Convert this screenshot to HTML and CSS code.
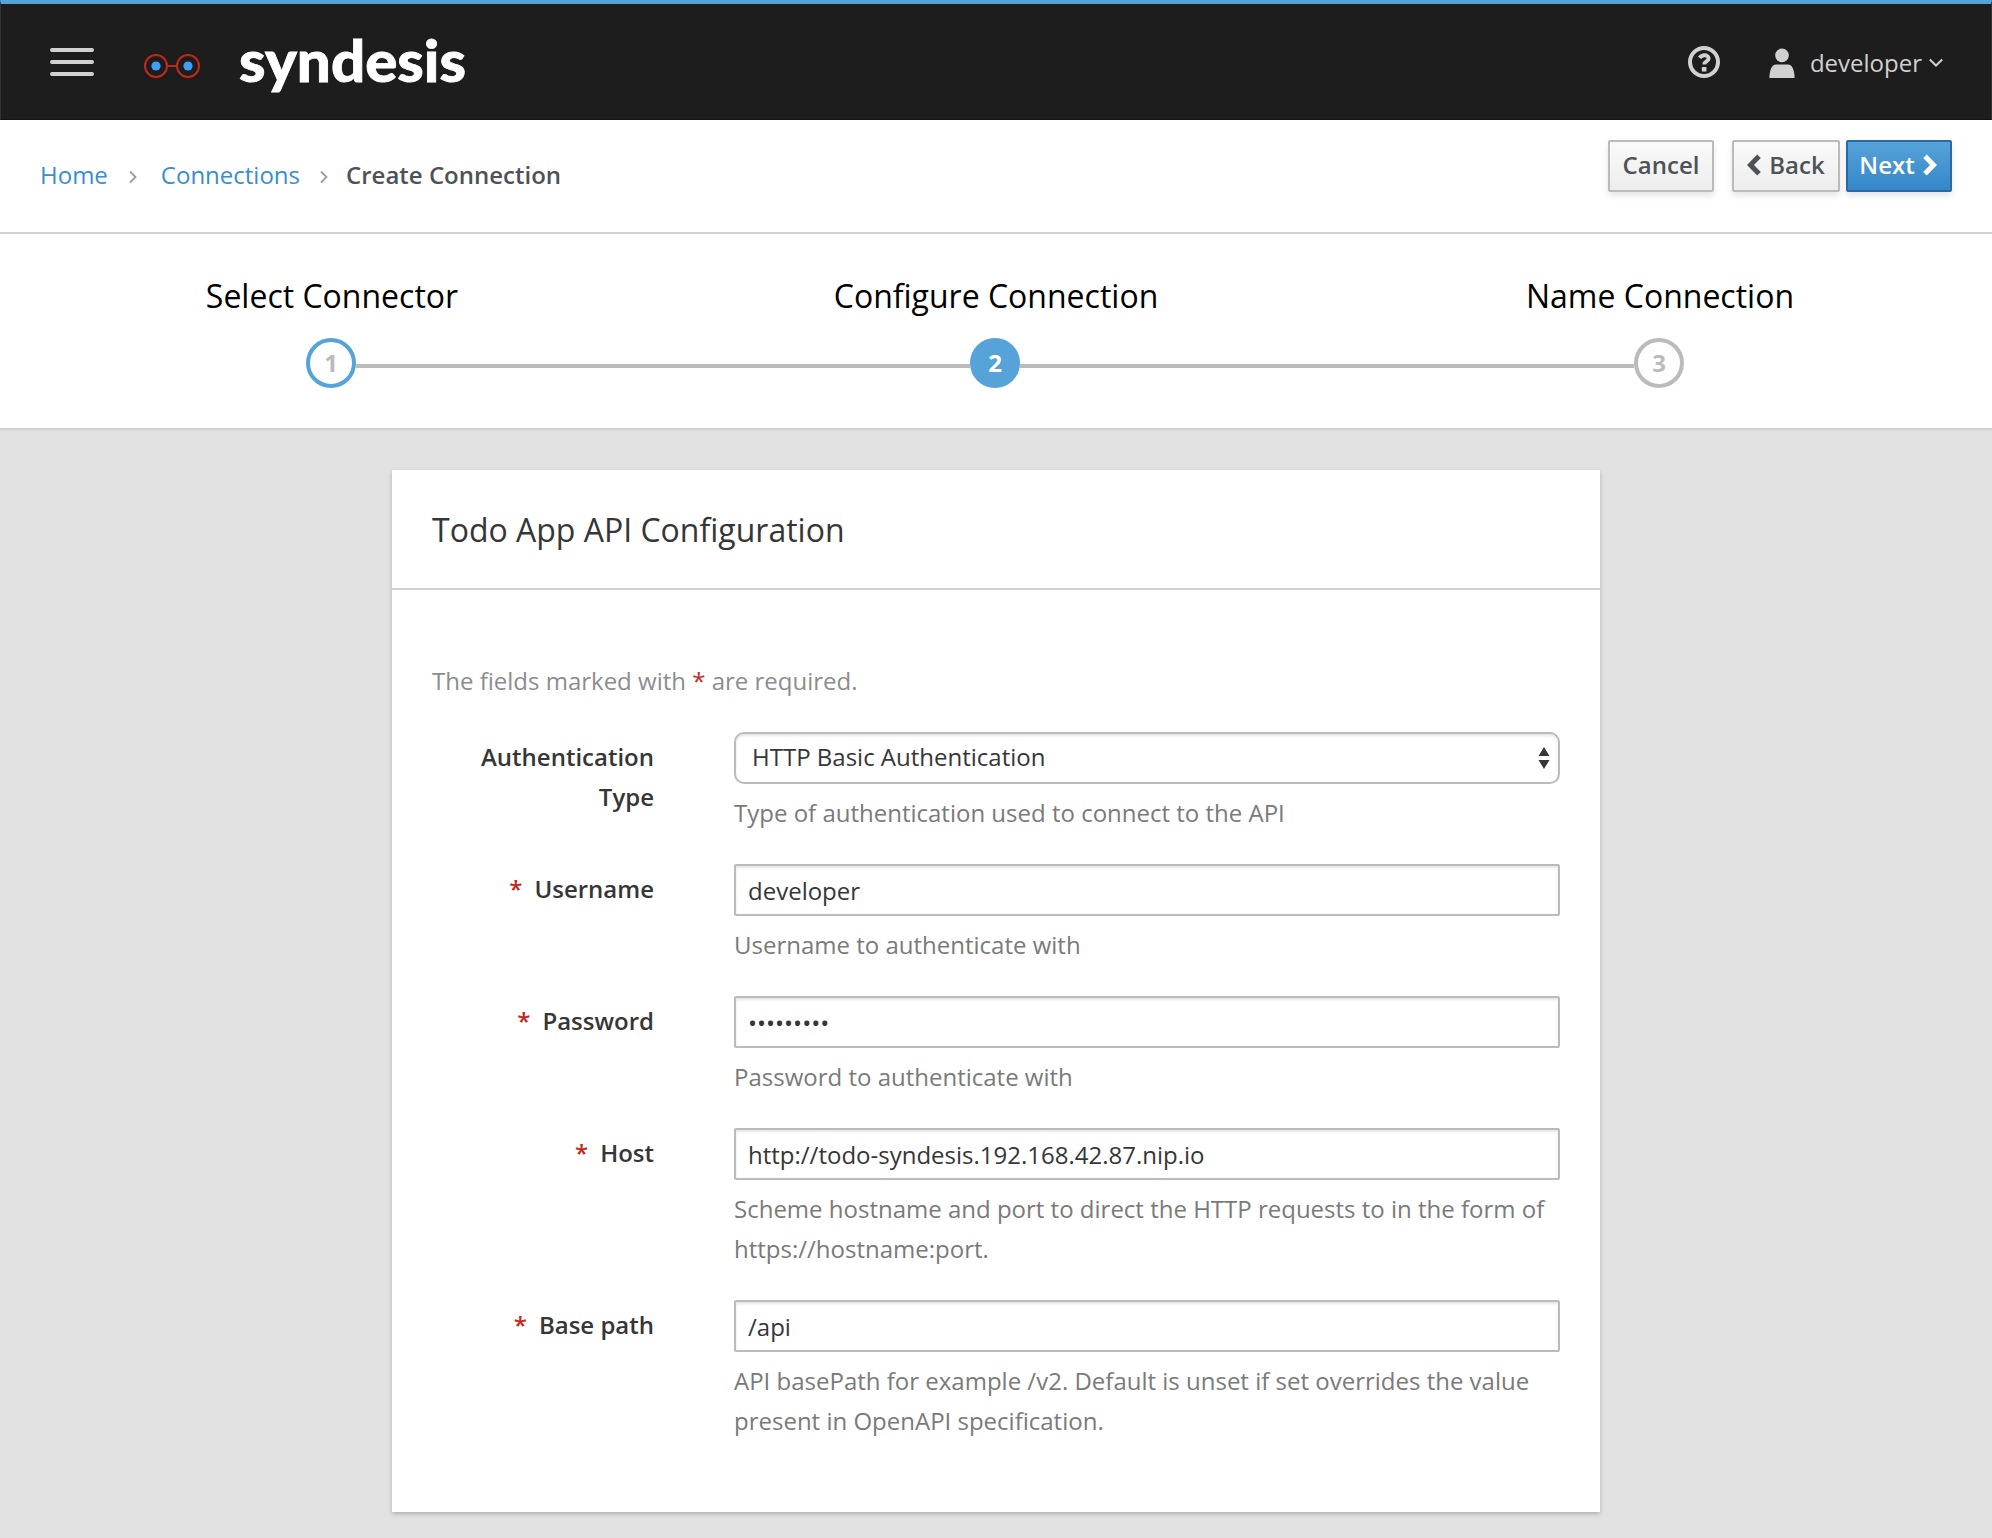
FILE: index.html
```html
<!DOCTYPE html>
<html lang="en">
<head>
<meta charset="utf-8">
<title>Syndesis</title>
<link rel="stylesheet" href="styles.css">
</head>
<body>
<header class="navbar">
  <button class="menu-toggle" aria-label="Menu"><span></span><span></span><span></span></button>
  <svg class="glasses" width="60" height="28" viewBox="0 0 60 28">
    <g fill="none" stroke="#c0281c" stroke-width="2">
      <circle cx="14" cy="14" r="11"/><circle cx="46" cy="14" r="11"/><path d="M25 14h10"/>
    </g>
    <circle cx="14" cy="14" r="4.600" fill="#429ef5"/><circle cx="46" cy="14" r="4.600" fill="#429ef5"/>
  </svg>
  <svg class="wordmark" width="240" height="96" viewBox="0 0 240 96">
    <text x="0" y="64" textLength="227" lengthAdjust="spacingAndGlyphs">syndesis</text>
  </svg>
  <div class="nav-tools">
    <svg width="32" height="32" viewBox="0 0 32 32">
      <circle cx="16" cy="16" r="14" fill="none" stroke="#d1d1d1" stroke-width="4"/>
      <path d="M11.600 11.900C13.200 9.600 15 9.200 16.400 9.200c2.500 0 4.200 1.500 4.200 3.400 0 2.900-4.400 2.700-4.400 5.800" fill="none" stroke="#d1d1d1" stroke-width="4"/>
      <rect x="13.800" y="21" width="4.600" height="4.500" fill="#d1d1d1"/>
    </svg>
    <div class="user">
      <svg width="26" height="32" viewBox="0 0 26 32">
        <circle cx="13" cy="9.400" r="6.800" fill="#d1d1d1"/>
        <path d="M.4 32.500C.4 25 2.500 18.500 7 18.500h12c4.500 0 6.600 6.500 6.600 14z" fill="#d1d1d1"/>
      </svg>
      <span class="user-name">developer</span>
      <svg class="caret" width="14" height="10" viewBox="0 0 14 10"><path d="M.8 1.500l6.200 6 6.200-6" fill="none" stroke="#d1d1d1" stroke-width="2"/></svg>
    </div>
  </div>
</header>

<div class="toolbar">
  <nav class="breadcrumb">
    <a>Home</a>
    <svg class="sep" width="8" height="14" viewBox="0 0 8 14"><path d="M1 1.500l5.500 5.500L1 12.500" fill="none" stroke="#9c9c9c" stroke-width="1.800"/></svg>
    <a>Connections</a>
    <svg class="sep sep-last" width="8" height="14" viewBox="0 0 8 14"><path d="M1 1.500l5.500 5.500L1 12.500" fill="none" stroke="#9c9c9c" stroke-width="1.800"/></svg>
    <strong>Create Connection</strong>
  </nav>
  <div class="actions">
    <button class="btn btn-cancel">Cancel</button>
    <button class="btn btn-back"><svg width="14" height="22" viewBox="0 0 14 22"><path d="M12 2.300L3.500 11 12 19.700" fill="none" stroke="currentColor" stroke-width="5"/></svg>Back</button>
    <button class="btn btn-next">Next<svg width="14" height="22" viewBox="0 0 14 22"><path d="M2 2.300l8.500 8.700L2 19.700" fill="none" stroke="currentColor" stroke-width="5"/></svg></button>
  </div>
</div>

<ol class="wizard">
  <li class="step done"><span class="step-title">Select Connector</span><span class="step-row"><i></i><b>1</b><i class="line"></i></span></li>
  <li class="step active"><span class="step-title">Configure Connection</span><span class="step-row"><i class="line"></i><b>2</b><i class="line"></i></span></li>
  <li class="step"><span class="step-title">Name Connection</span><span class="step-row"><i class="line"></i><b>3</b><i></i></span></li>
</ol>

<main>
  <section class="card">
    <h2>Todo App API Configuration</h2>
    <div class="card-body">
      <p class="note">The fields marked with <span class="star">*</span> are required.</p>
      <div class="field">
        <label>Authentication Type</label>
        <div>
          <div class="control select"><span>HTTP Basic Authentication</span><svg width="12" height="22" viewBox="0 0 12 22"><path d="M6 0l5.500 9H.5zM6 22l5.500-9H.5z" fill="#363636"/></svg></div>
          <p class="help">Type of authentication used to connect to the API</p>
        </div>
      </div>
      <div class="field">
        <label><span class="star">*</span>Username</label>
        <div><div class="control">developer</div><p class="help">Username to authenticate with</p></div>
      </div>
      <div class="field">
        <label><span class="star">*</span>Password</label>
        <div><div class="control">•••••••••</div><p class="help">Password to authenticate with</p></div>
      </div>
      <div class="field">
        <label><span class="star">*</span>Host</label>
        <div><div class="control">http://todo-syndesis.192.168.42.87.nip.io</div><p class="help">Scheme hostname and port to direct the HTTP requests to in the form of https://hostname:port.</p></div>
      </div>
      <div class="field">
        <label><span class="star">*</span>Base path</label>
        <div><div class="control">/api</div><p class="help">API basePath for example /v2. Default is unset if set overrides the value present in OpenAPI specification.</p></div>
      </div>
    </div>
  </section>
</main>
</body>
</html>
```
FILE: styles.css
```css
* { box-sizing: border-box; }
body {
  margin: 0;
  min-height: 1538px;
  background: #e1e1e1;
  color: #363636;
  font: 24px/40px "Open Sans", sans-serif;
}
p, h2, ol { margin: 0; padding: 0; }
svg { display: block; flex: none; }
button { font: inherit; }

.navbar {
  display: flex;
  align-items: center;
  height: 120px;
  padding: 0 48px 0 49px;
  background: #1d1d1d;
  border: 1px solid #333;
  border-top: 4px solid #56a3d9;
  border-bottom: 1px solid #151515;
}
.menu-toggle {
  display: flex;
  flex-direction: column;
  gap: 8px;
  width: 44px;
  padding: 0;
  border: 0;
  background: none;
}
.menu-toggle span { height: 4px; border-radius: 2px; background: #d1d1d1; }
.glasses { margin: 9px 0 0 48px; }
.wordmark { margin: 8px 0 0 37px; }
.wordmark text { font: 900 58px/1 Lato, sans-serif; fill: #fff; stroke: #fff; stroke-width: .8px; }
.nav-tools { display: flex; align-items: center; gap: 49px; margin-left: auto; color: #d1d1d1; }
.user { display: flex; align-items: center; }
.user-name { margin: 3px 7px 0 15px; line-height: 40px; }
.caret { margin-top: 3px; }

.toolbar {
  display: flex;
  justify-content: space-between;
  height: 114px;
  padding: 20px 40px 0;
  background: #fff;
  border-bottom: 2px solid #d1d1d1;
}
.breadcrumb { display: flex; align-items: center; height: 40px; margin-top: 15px; }
.breadcrumb a { color: #398ecf; }
.breadcrumb strong { font-weight: 600; color: #4d5258; }
.sep { margin: 3px 24px 0 21px; }
.sep-last { margin: 3px 18px 0 20px; }
.actions { display: flex; align-items: flex-start; }
.btn {
  display: flex;
  align-items: center;
  justify-content: center;
  gap: 8px;
  width: 106px;
  height: 52px;
  padding: 0 0 2px;
  border: 2px solid #bbb;
  border-radius: 2px;
  background: linear-gradient(#fafafa, #ededed);
  box-shadow: 0 4px 6px rgba(3, 3, 3, .1);
  color: #4d5258;
  font-weight: 600;
  line-height: 40px;
}
.btn-back { width: 108px; margin: 0 6px 0 18px; }
.btn-next { padding-right: 2px; border-color: #2b6ba3; background: linear-gradient(#56a3d9, #3587c9); color: #fff; }

.wizard {
  display: flex;
  height: 196px;
  padding-top: 42px;
  background: #fff;
  border-bottom: 2px solid #d1d1d1;
  list-style: none;
  color: #000;
}
.step { flex: 1; display: flex; flex-direction: column; align-items: center; gap: 22px; }
.step-title { font-size: 32px; line-height: 40px; }
.step-row { display: flex; align-items: center; width: 100%; margin-right: 2px; }
.step-row i { flex: 1; height: 4px; margin-top: 6px; }
.step-row .line { background: #bbb; }
.step b {
  width: 50px;
  height: 50px;
  border: 4px solid #bbb;
  border-radius: 50%;
  color: #bbb;
  font-weight: 700;
  line-height: 41px;
  text-align: center;
}
.step.done b { border-color: #56a3d9; }
.step.active b { border-color: #56a3d9; background: #56a3d9; color: #fff; }

main { padding-top: 40px; }
.card {
  width: 1208px;
  height: 1042px;
  margin: 0 auto;
  background: #fff;
  box-shadow: 0 2px 4px rgba(3, 3, 3, .22);
}
.card h2 {
  height: 120px;
  padding: 40px 40px 0;
  border-bottom: 2px solid #d1d1d1;
  font-size: 32px;
  font-weight: 400;
  line-height: 40px;
}
.card-body { padding: 71px 40px 0; }
.note { color: #8b8d8f; }
.star { color: #c0281c; }
.field { display: grid; grid-template-columns: 222px 826px; column-gap: 80px; margin-bottom: 31px; }
.note + .field { margin-top: 31px; }
.field label { padding-top: 5px; font-weight: 600; text-align: right; }
.field label .star { margin-right: 12px; }
.control {
  height: 52px;
  padding: 5px 12px 0;
  border: 2px solid #bbb;
  border-radius: 2px;
  box-shadow: inset 0 2px 3px rgba(3, 3, 3, .1);
}
.select {
  display: flex;
  justify-content: space-between;
  align-items: center;
  padding: 0 8px 0 16px;
  border-radius: 10px;
}
.select span { margin-bottom: 2px; }
.help { margin-top: 9px; color: #7a7a7a; }
```
